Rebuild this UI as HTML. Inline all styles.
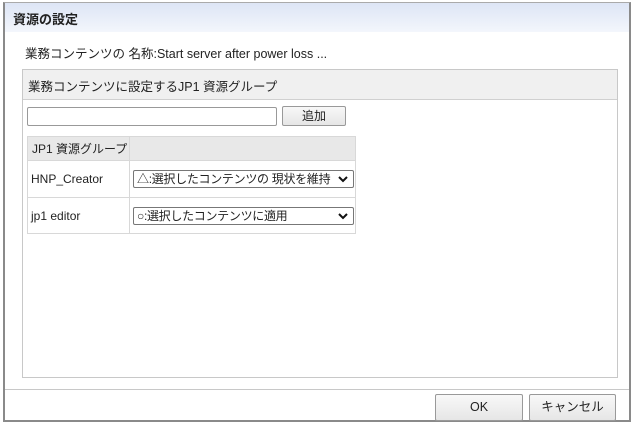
<!DOCTYPE html>
<html><head><meta charset="utf-8"><style>
*{box-sizing:border-box;margin:0;padding:0}
body{width:633px;height:425px;background:#fff;font-family:"Liberation Sans","Noto Sans CJK JP",sans-serif;font-size:12px;color:#222;position:relative;overflow:hidden}
.win{position:absolute;left:3px;top:2px;width:628px;height:420px;border:2px solid #8a8a8a;border-top:1px solid #aaa;background:#fff}
.title{position:absolute;left:0;top:0;right:0;height:29px;background:linear-gradient(#dde5f5,#f3f6fc);font-weight:bold;font-size:13px;padding:6px 0 0 8px}
.name{position:absolute;left:20px;top:40px;font-size:12.5px}
.panel{position:absolute;left:17px;top:66px;width:596px;height:309px;border:1px solid #c8c8c8}
.ph{height:30px;background:#f0f0f0;border-bottom:1px solid #d0d0d0;padding:6px 0 0 5px;font-size:12.5px}
.inp{position:absolute;left:4px;top:37px;width:250px;height:19px;border:1px solid #999;border-radius:2px}
.btn{position:absolute;border:1px solid #999;border-radius:2px;background:linear-gradient(#f8f8f8,#e6e6e6);text-align:center}
table{position:absolute;left:4px;top:66px;border-collapse:collapse;width:329px}
td{border:1px solid #d8d8d8;font-size:12px;vertical-align:middle}
.sel{width:221px;height:18px;border:1px solid #777;border-radius:2px;margin-left:3px;padding:0 0 0 3px;position:relative;font-size:12px;line-height:16px;white-space:nowrap;overflow:hidden;letter-spacing:-0.3px}
.sel svg{position:absolute;right:4px;top:5px;background:#fff}
.foot{position:absolute;left:0;right:0;top:386px;border-top:1px solid #c8c8c8}
</style></head><body>
<div class="win">
<div class="title">資源の設定</div>
<div class="name">業務コンテンツの 名称:Start server after power loss ...</div>
<div class="panel">
<div class="ph">業務コンテンツに設定するJP1 資源グループ</div>
<div class="inp"></div>
<div class="btn" style="left:259px;top:36px;width:64px;height:20px;line-height:18px">追加</div>
<table>
<tr style="height:24px;background:#e8e8e8"><td style="width:102px;padding-left:4px">JP1 資源グループ</td><td></td></tr>
<tr style="height:37px"><td style="padding-left:3px">HNP_Creator</td><td><div class="sel">△:選択したコンテンツの 現状を維持<svg width="12" height="7"><path d="M2 1l4 4 4-4" stroke="#111" stroke-width="2" fill="none"/></svg></div></td></tr>
<tr style="height:36px"><td style="padding-left:3px">jp1 editor</td><td><div class="sel">○:選択したコンテンツに適用<svg width="12" height="7"><path d="M2 1l4 4 4-4" stroke="#111" stroke-width="2" fill="none"/></svg></div></td></tr>
</table>
</div>
<div class="foot"></div>
<div class="btn" style="left:430px;top:391px;width:88px;height:27px;line-height:25px;font-size:12.5px">OK</div>
<div class="btn" style="left:524px;top:391px;width:87px;height:27px;line-height:25px;font-size:12.5px">キャンセル</div>
</div>
</body></html>
